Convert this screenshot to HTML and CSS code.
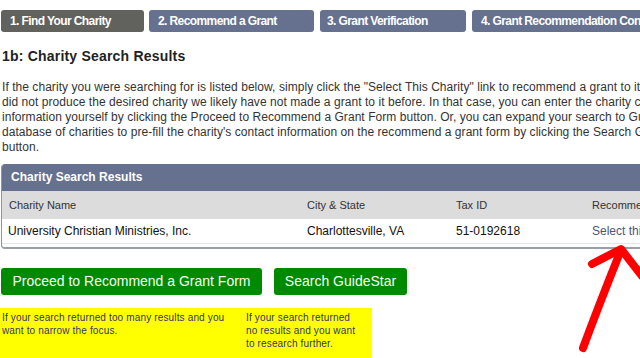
FILE: index.html
```html
<!DOCTYPE html>
<html lang="en">
<head>
<meta charset="utf-8">
<title>Find Your Charity</title>
<link rel="stylesheet" href="styles.css">
</head>
<body>
<div class="page">
  <nav class="steps">
    <div class="step step-1 current">1. Find Your Charity</div>
    <div class="step step-2">2. Recommend a Grant</div>
    <div class="step step-3">3. Grant Verification</div>
    <div class="step step-4">4. Grant Recommendation Confirmation</div>
  </nav>

  <h1 class="title">1b: Charity Search Results</h1>

  <p class="intro">
    <span class="line">If the charity you were searching for is listed below, simply click the "Select This Charity" link to recommend a grant to it. If your search</span>
    <span class="line">did not produce the desired charity we likely have not made a grant to it before. In that case, you can enter the charity contact</span>
    <span class="line">information yourself by clicking the Proceed to Recommend a Grant Form button. Or, you can expand your search to GuideStar's</span>
    <span class="line">database of charities to pre-fill the charity's contact information on the recommend a grant form by clicking the Search GuideStar</span>
    <span class="line">button.</span>
  </p>

  <section class="panel">
    <div class="panel-title">Charity Search Results</div>
    <div class="row row-head">
      <div class="cell">Charity Name</div>
      <div class="cell">City &amp; State</div>
      <div class="cell">Tax ID</div>
      <div class="cell">Recommend a Grant</div>
    </div>
    <div class="row row-data">
      <div class="cell">University Christian Ministries, Inc.</div>
      <div class="cell">Charlottesville, VA</div>
      <div class="cell">51-0192618</div>
      <div class="cell"><a class="select-link" href="#">Select this Charity</a></div>
    </div>
  </section>

  <div class="actions">
    <button class="btn btn-proceed" type="button">Proceed to Recommend a Grant Form</button>
    <button class="btn btn-guidestar" type="button">Search GuideStar</button>
  </div>

  <div class="help">
    <div class="help-col help-1">If your search returned too many results and you want to narrow the focus.</div>
    <div class="help-col help-2">If your search returned no results and you want to research further.</div>
  </div>
</div>

<svg class="arrow" width="640" height="358" viewBox="0 0 640 358" aria-hidden="true">
  <path d="M583 348 Q600 302 621 250" fill="none" stroke="#ff0000" stroke-width="8" stroke-linecap="round"/>
  <path d="M592 264 L621 249 L642 276" fill="none" stroke="#ff0000" stroke-width="8" stroke-linecap="round" stroke-linejoin="round"/>
</svg>
</body>
</html>
```

FILE: styles.css
```css
html, body {
  margin: 0;
  padding: 0;
  overflow: hidden;
  background: #ffffff;
}

body {
  font-family: "Liberation Sans", Arial, sans-serif;
  color: #333333;
  width: 640px;
  height: 358px;
  position: relative;
}

.page {
  padding: 10px 0 0 1px;
  width: 1000px;
}

/* Step tabs */
.steps {
  display: flex;
  height: 22px;
}

.step {
  box-sizing: border-box;
  height: 22px;
  line-height: 22px;
  padding-left: 9px;
  border-radius: 3px;
  background: #65718f;
  color: #ffffff;
  font-size: 12px;
  font-weight: bold;
  letter-spacing: -0.6px;
  white-space: nowrap;
}

.step.current {
  background: #61625e;
}

.step-1 { width: 143px; margin-right: 5px; }
.step-2 { width: 165px; margin-right: 6px; }
.step-3 { width: 146px; margin-right: 6px; padding-left: 7px; }
.step-4 { width: 250px; }

/* Heading */
.title {
  margin: 16px 0 0 1px;
  font-size: 14px;
  line-height: 16px;
  font-weight: bold;
  color: #222222;
  letter-spacing: 0.2px;
}

/* Intro paragraph */
.intro {
  margin: 16px 0 0 1px;
  font-size: 12px;
  line-height: 15px;
  color: #333333;
  letter-spacing: 0.05px;
}

.intro .line {
  display: block;
  white-space: nowrap;
}

/* Results panel */
.panel {
  margin-top: 9px;
  width: 760px;
  border-left: 1px solid #8d939f;
  border-bottom: 2px solid #9a9fa8;
  border-radius: 4px 0 0 4px;
  overflow: hidden;
  padding-bottom: 3px;
}

.panel-title {
  height: 27px;
  line-height: 27px;
  background: #65718f;
  color: #ffffff;
  font-size: 12px;
  font-weight: bold;
  padding-left: 9px;
}

.row {
  display: grid;
  grid-template-columns: 299px 149px 136px 1fr;
  padding-left: 6px;
}

.row-head {
  height: 28px;
  line-height: 28px;
  background: #dcdcdc;
  font-size: 11px;
  color: #333333;
}

.row-head .cell:first-child { padding-left: 1px; }

.row-data {
  height: 24px;
  line-height: 24px;
  background: #ffffff;
  font-size: 12px;
  color: #111111;
  border-bottom: 1px solid #e6e6e6;
}

.cell {
  white-space: nowrap;
}

.select-link {
  color: #4a5676;
  text-decoration: none;
}

/* Buttons */
.actions {
  display: flex;
  gap: 12px;
  margin-top: 19px;
}

.btn {
  height: 27px;
  padding: 0 10px;
  border: none;
  border-radius: 3px;
  background: #008a00;
  color: #f4fff4;
  font-family: "Liberation Sans", Arial, sans-serif;
  font-size: 14px;
  line-height: 27px;
  white-space: nowrap;
  cursor: pointer;
}

.btn-proceed { width: 261px; }
.btn-guidestar { width: 133px; }

/* Yellow help notes */
.help {
  display: flex;
  margin: 13px 0 0 -1px;
  width: 372px;
  height: 60px;
  background: #ffff00;
  color: #33356e;
  font-size: 10px;
  line-height: 13px;
  letter-spacing: 0.15px;
}

.help-col {
  padding-top: 3px;
}

.help-1 {
  width: 232px;
  padding-left: 2px;
  margin-right: 12px;
}

.help-2 {
  width: 114px;
}

/* Annotation arrow overlay */
.arrow {
  position: absolute;
  left: 0;
  top: 0;
  pointer-events: none;
}
```
